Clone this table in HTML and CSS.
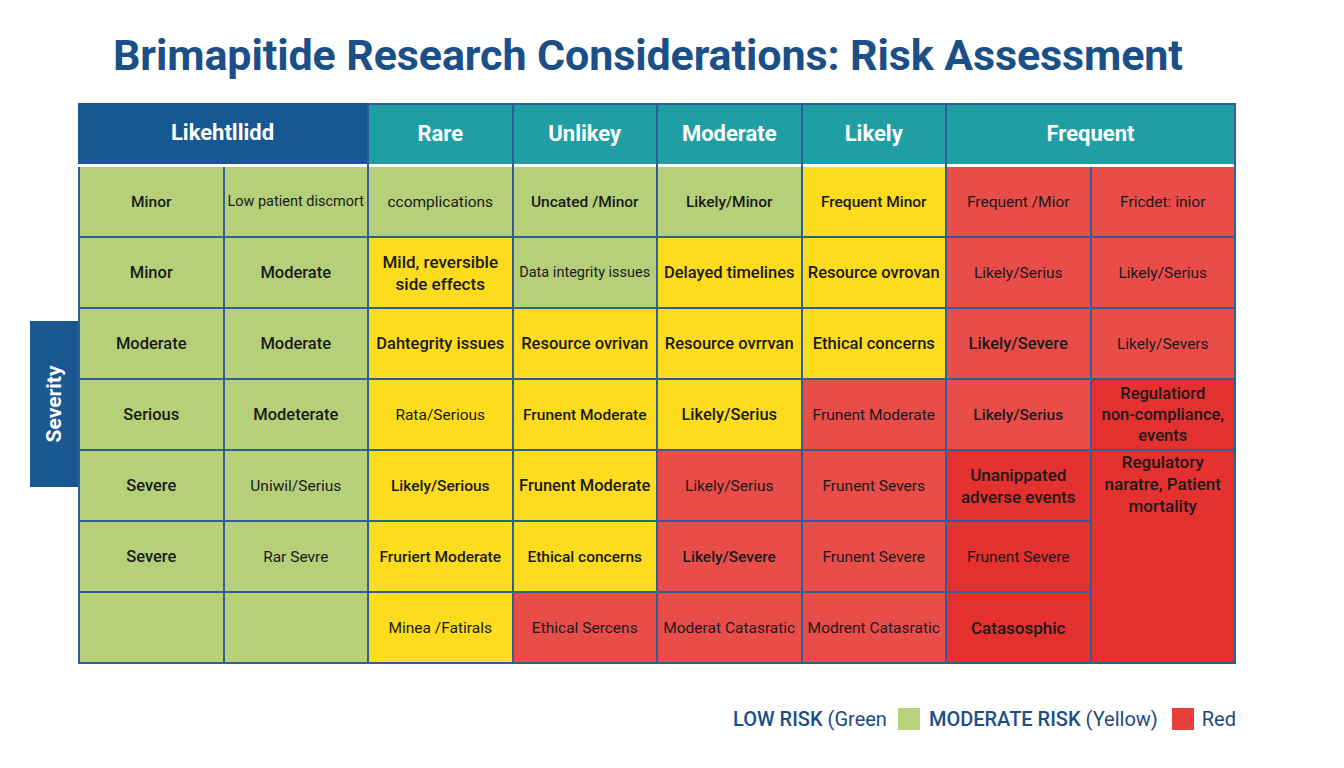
FILE: index.html
```html
<!DOCTYPE html>
<html lang="en">
<head>
<meta charset="utf-8">
<title>Brimapitide Research Considerations: Risk Assessment</title>
<link rel="stylesheet" href="styles.css">
</head>
<body>
<h1 class="title">Brimapitide Research Considerations: Risk Assessment</h1>
<div class="board">
  <div class="axis"><span>Severity</span></div>
  <div class="matrix">
    <div class="hd hd-dark span2">Likehtllidd</div>
    <div class="hd">Rare</div>
    <div class="hd">Unlikey</div>
    <div class="hd">Moderate</div>
    <div class="hd">Likely</div>
    <div class="hd span2">Frequent</div>

    <div class="c g m">Minor</div>
    <div class="c g sm">Low patient discmort</div>
    <div class="c g">ccomplications</div>
    <div class="c g m">Uncated /Minor</div>
    <div class="c g m">Likely/Minor</div>
    <div class="c y m">Frequent Minor</div>
    <div class="c r">Frequent /Mior</div>
    <div class="c r">Fricdet: inior</div>

    <div class="c g b">Minor</div>
    <div class="c g b">Moderate</div>
    <div class="c y b lg">Mild, reversible side effects</div>
    <div class="c g sm">Data integrity issues</div>
    <div class="c y b">Delayed timelines</div>
    <div class="c y b">Resource ovrovan</div>
    <div class="c r">Likely/Serius</div>
    <div class="c r">Likely/Serius</div>

    <div class="c g b">Moderate</div>
    <div class="c g b">Moderate</div>
    <div class="c y b">Dahtegrity issues</div>
    <div class="c y b">Resource ovrivan</div>
    <div class="c y b">Resource ovrrvan</div>
    <div class="c y b">Ethical concerns</div>
    <div class="c r b">Likely/Severe</div>
    <div class="c r">Likely/Severs</div>

    <div class="c g b">Serious</div>
    <div class="c g b">Modeterate</div>
    <div class="c y">Rata/Serious</div>
    <div class="c y m">Frunent Moderate</div>
    <div class="c y b">Likely/Serius</div>
    <div class="c r">Frunent Moderate</div>
    <div class="c r m">Likely/Serius</div>
    <div class="c rd b lg tight">Regulatiord<br>non-compliance,<br>events</div>

    <div class="c g b">Severe</div>
    <div class="c g">Uniwil/Serius</div>
    <div class="c y m">Likely/Serious</div>
    <div class="c y b">Frunent Moderate</div>
    <div class="c r">Likely/Serius</div>
    <div class="c r">Frunent Severs</div>
    <div class="c rd b lg">Unanippated adverse events</div>
    <div class="c rd b lg tall">Regulatory naratre, Patient mortality</div>

    <div class="c g b">Severe</div>
    <div class="c g">Rar Sevre</div>
    <div class="c y m">Fruriert Moderate</div>
    <div class="c y m">Ethical concerns</div>
    <div class="c r m">Likely/Severe</div>
    <div class="c r">Frunent Severe</div>
    <div class="c rd">Frunent Severe</div>

    <div class="c g"></div>
    <div class="c g"></div>
    <div class="c y">Minea /Fatirals</div>
    <div class="c r">Ethical Sercens</div>
    <div class="c r">Moderat Catasratic</div>
    <div class="c r">Modrent Catasratic</div>
    <div class="c rd bb lg">Catasosphic</div>
  </div>
</div>
<div class="legend">
  <span class="lg-key">LOW RISK</span><span class="lg-note">(Green</span>
  <span class="swatch sw-green"></span>
  <span class="lg-key">MODERATE RISK</span><span class="lg-note">(Yellow)</span>
  <span class="swatch sw-red"></span>
  <span class="lg-note">Red</span>
</div>
</body>
</html>
```
FILE: styles.css
```css
html, body {
  margin: 0;
  padding: 0;
  background: #ffffff;
}
body {
  font-family: Roboto, "Liberation Sans", Arial, sans-serif;
  color: #1a1a1a;
  width: 1344px;
  height: 768px;
  overflow: hidden;
}
.title {
  margin: 0;
  padding: 29px 0 0 113px;
  font-size: 43px;
  line-height: 52px;
  font-weight: 700;
  color: #1b4f87;
  letter-spacing: -0.1px;
  white-space: nowrap;
}
.board {
  display: flex;
  align-items: flex-start;
  margin-top: 22px;
  padding-left: 30px;
}
.axis {
  width: 48px;
  height: 166px;
  margin-top: 218px;
  background: #1a5894;
  display: flex;
  align-items: center;
  justify-content: center;
}
.axis span {
  transform: rotate(-90deg);
  color: #ffffff;
  font-weight: 700;
  font-size: 21px;
  white-space: nowrap;
}
.matrix {
  width: 1158px;
  box-sizing: border-box;
  display: grid;
  grid-template-columns: repeat(8, 1fr);
  grid-template-rows: 60px repeat(7, 69px);
  gap: 2px;
  padding: 2px;
  background: #2d5e96;
}
.hd {
  background: #1f9ea4;
  color: #ffffff;
  font-weight: 700;
  font-size: 22px;
  display: flex;
  align-items: center;
  justify-content: center;
  border-bottom: 3px solid #ffffff;
  margin-bottom: -2px;
  box-sizing: border-box;
  padding-bottom: 2px;
}
.hd-dark {
  background: #185892;
  margin-left: -2px;
  margin-top: -2px;
  padding-top: 0;
}
.span2 {
  grid-column: span 2;
}
.c {
  display: flex;
  align-items: center;
  justify-content: center;
  text-align: center;
  font-size: 15.5px;
  line-height: 22px;
  font-weight: 400;
  padding: 0 2px;
  white-space: nowrap;
}
.c.lg {
  white-space: normal;
  padding: 0 6px;
}
.g { background: #b6d07a; }
.y { background: #fcdc1d; }
.r { background: #e84d4a; }
.rd { background: #e4302f; }
.m { font-weight: 500; }
.b { font-weight: 500; font-size: 16.5px; }
.bb { font-weight: 700; font-size: 17px; }
.lg { font-size: 17px; font-weight: 500; }
.sm { font-size: 14.5px; }
.c.tight { padding: 0 2px; line-height: 21px; font-size: 16.5px; }
.tall {
  grid-row: span 3;
  align-items: flex-start;
  padding-top: 8px;
}
.legend {
  display: flex;
  align-items: center;
  justify-content: flex-end;
  width: 1236px;
  margin-top: 43px;
  height: 24px;
  font-size: 20px;
  color: #1b4f87;
}
.lg-key {
  font-weight: 500;
  margin-right: 5px;
}
.lg-note {
  font-weight: 400;
  color: #1d4a7c;
}
.swatch {
  width: 22px;
  height: 22px;
  margin: 0 9px 0 11px;
}
.sw-green { background: #b6d27a; }
.sw-red { background: #e6403c; margin: 0 8px 0 14px; }
```
